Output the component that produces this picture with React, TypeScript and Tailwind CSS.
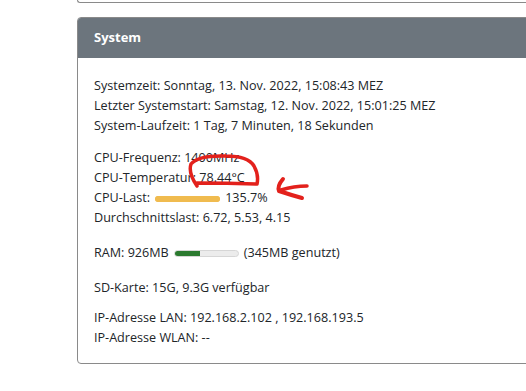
import React from "react";

const font = { fontFamily: '"Open Sans", "Noto Sans", sans-serif' };

function Bar({ pct, color, track }: { pct: number; color: string; track: string }) {
  return (
    <span className={`inline-block h-[6px] w-[65px] rounded-full align-middle mx-[5px] overflow-hidden ${track}`}>
      <span className={`block h-full rounded-full ${color}`} style={{ width: `${pct}%` }} />
    </span>
  );
}

export default function App() {
  return (
    <div className="relative w-[526px] h-[391px] overflow-hidden bg-white text-[12.6px] text-[#212529]" style={font}>
      <div className="ml-[77px] w-[470px] h-[3px] border-l border-b border-[#8a8a8a] rounded-bl-[4px]" />

      <div className="ml-[77px] mt-[14px] w-[470px] border border-[#8a8a8a] rounded-[4px] overflow-hidden">
        <div className="h-[40px] bg-[#6c757d] flex items-center px-[16px]">
          <span className="text-white font-bold text-[13px]">System</span>
        </div>
        <div className="px-[16px] pt-[18px] pb-[15px] leading-[20px]">
          <div>Systemzeit: Sonntag, 13. Nov. 2022, 15:08:43 MEZ</div>
          <div>Letzter Systemstart: Samstag, 12. Nov. 2022, 15:01:25 MEZ</div>
          <div>System-Laufzeit: 1 Tag, 7 Minuten, 18 Sekunden</div>

          <div className="mt-[12px]">CPU-Frequenz: 1400MHz</div>
          <div>CPU-Temperatur: 78.44°C</div>
          <div>
            CPU-Last:
            <Bar pct={100} color="bg-[#f0bb4f]" track="bg-[#f0bb4f]" />
            135.7%
          </div>
          <div>Durchschnittslast: 6.72, 5.53, 4.15</div>

          <div className="mt-[15px]">
            RAM: 926MB
            <span className="inline-block h-[7px] w-[65px] rounded-full align-middle mx-[5px] overflow-hidden bg-[#ececec] border border-[#d6d6d6]">
              <span className="block h-full bg-[#2b7a2f]" style={{ width: `${(345 / 926) * 100 + 3}%` }} />
            </span>
            (345MB genutzt)
          </div>

          <div className="mt-[15px]">SD-Karte: 15G, 9.3G verfügbar</div>

          <div className="mt-[10px]">IP-Adresse LAN: 192.168.2.102 , 192.168.193.5</div>
          <div>IP-Adresse WLAN: --</div>
        </div>
      </div>

      <svg className="absolute left-0 top-0 pointer-events-none" width="526" height="391" fill="none">
        <path
          d="M197,186 Q188,173 191,164 Q198,155 226,156 Q248,156 254,166 Q259,175 257,184 Q228,183 197,183"
          stroke="#e3211c"
          strokeWidth="3.5"
          strokeLinecap="round"
          strokeLinejoin="round"
        />
        <path d="M283,179 Q277,186 279,191 Q291,195 302,198" stroke="#e3211c" strokeWidth="4" strokeLinecap="round" />
        <path d="M281,190 Q294,186 307,186" stroke="#e3211c" strokeWidth="3.5" strokeLinecap="round" />
      </svg>
    </div>
  );
}
